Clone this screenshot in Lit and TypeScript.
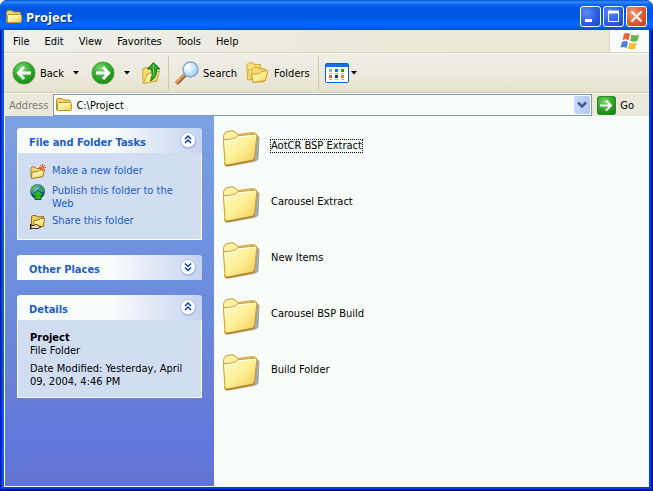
import { LitElement, html, svg, css } from "lit";
import { customElement, state } from "lit/decorators.js";

const gradients = html`<svg class="defs" width="0" height="0" aria-hidden="true">
  <defs>
    <linearGradient id="folder" x1="0" y1="0" x2="1" y2="1">
      <stop offset="0" stop-color="#fffcc8" /><stop offset="0.5" stop-color="#fdf096" /><stop offset="1" stop-color="#f3c64c" />
    </linearGradient>
    <linearGradient id="folderBack" x1="0" y1="0" x2="1" y2="0">
      <stop offset="0" stop-color="#fff3a4" /><stop offset="1" stop-color="#e8bc4c" />
    </linearGradient>
    <radialGradient id="green" cx="0.4" cy="0.3" r="0.75">
      <stop offset="0" stop-color="#7fd973" /><stop offset="0.5" stop-color="#38ad2c" /><stop offset="1" stop-color="#168312" />
    </radialGradient>
    <radialGradient id="lens" cx="0.35" cy="0.35" r="0.7">
      <stop offset="0" stop-color="#ffffff" /><stop offset="0.5" stop-color="#cfeaff" /><stop offset="1" stop-color="#9cc8f4" />
    </radialGradient>
    <radialGradient id="globe" cx="0.4" cy="0.3" r="0.7">
      <stop offset="0" stop-color="#8cc4f8" /><stop offset="0.6" stop-color="#2a6cc8" /><stop offset="1" stop-color="#123a86" />
    </radialGradient>
  </defs>
</svg>`;

const bigFolder = html`<svg class="big" viewBox="0 0 38 38" aria-hidden="true">
  <path d="M4 37.500L7 37.500L34 32.500L36.500 30L37.500 8L34 5Z" fill="#6f7268" opacity="0.6" />
  <path d="M1.500 12V6.500L3.500 3L10 1.500L14 3.500L16 5.500L31.500 3.500L34.500 5L33 9L8 14Z" fill="url(#folderBack)" stroke="#cfa03a" />
  <path d="M2.500 7L4.200 4L9.800 2.500L13.500 4.500L15 7L12 10H2.500Z" fill="#fff0a0" />
  <path d="M1.500 12.500Q1.500 10.800 3 10.600L11 9.800Q13 9.500 14.300 7.800Q15.300 6.700 17 6.600L33.500 5.200Q35 5.200 34.900 7L32.200 29.500Q32 31 30.500 31.500L5 36.500Q3.200 36.700 3 34.500Z" fill="url(#folder)" stroke="#cf9c34" />
  <path d="M2.900 13Q2.800 11.900 4 11.700L11.500 10.900Q14 10.500 15.200 8.800Q16 7.800 17.500 7.700L33.600 6.300" fill="none" stroke="#fffef0" />
  <path d="M3 34.500Q3.200 36.700 5 36.500L30.500 31.500Q32 31 32.200 29.500" fill="none" stroke="#b8821e" stroke-width="1.300" />
</svg>`;

const smallFolder = html`<svg class="i16" viewBox="0 0 16 16" aria-hidden="true">
  <path d="M0.500 13V3L1.500 1.500H6L7.500 3H13.500L14.500 4V13Z" fill="#f6d565" stroke="#b98a27" />
  <path d="M2.500 5.500H14.500L15.500 6.500V12.500L14.500 13.500H2.500L1.500 12.500V6.500Z" fill="url(#folder)" stroke="#c09230" />
  <path d="M2.500 6.500H14" stroke="#fffce0" />
</svg>`;

const roundArrow = (d: string) => html`<svg class="i24" viewBox="0 0 24 24" aria-hidden="true">
  <circle cx="12" cy="12" r="11" fill="url(#green)" stroke="#4a9e41" />
  <path d=${d} fill="none" stroke="#fff" stroke-width="3" />
</svg>`;

const upIcon = html`<svg class="i24" viewBox="0 0 24 24" aria-hidden="true">
  <path d="M3 21.500L2.500 9L4 7L9 6.500L10.500 8L17 8.500V20Z" fill="#f6dc6c" stroke="#cfa132" />
  <path d="M3.500 22.500L7 13L19.500 10L16.500 20Z" fill="url(#folder)" stroke="#cfa132" />
  <path d="M7.500 8L13.500 1.500L20 8H16.500Q17.500 16.500 10.500 20Q13.500 14 11.500 8Z" fill="#2fa32b" stroke="#187d18" />
  <path d="M13.500 3.500V9Q14.500 13 13 16" fill="none" stroke="#66c85c" />
</svg>`;

const searchIcon = html`<svg class="i24" viewBox="0 0 24 24" aria-hidden="true">
  <path d="M1.500 22.500L10 14" stroke="#8b6a4a" stroke-width="4" />
  <path d="M1.200 21.500L9 13.700" stroke="#f0a04a" stroke-width="2" />
  <circle cx="15.500" cy="8.500" r="7.500" fill="url(#lens)" stroke="#8ca6cc" stroke-width="1.500" />
  <path d="M10.500 8Q11 4 15 3.500" fill="none" stroke="#fff" stroke-width="1.500" />
</svg>`;

const foldersIcon = html`<svg class="i24" viewBox="0 0 24 24" aria-hidden="true">
  <path d="M1.500 18.500L0.800 4L2.500 2L7 1.800L8.500 3.800L14.500 3.500V15L4 19Z" fill="#fbe57c" stroke="#d0a330" />
  <path d="M4.500 18L2.500 9L15 6.500V15Z" fill="#fdf09a" stroke="#d8ae40" />
  <path d="M6.500 21L5.800 8.500L7.500 6.500L11.500 6L13 8H19.500V11.500L17 21Z" fill="#f9df70" stroke="#d0a330" />
  <path d="M7 21.500L5.500 13.500L14 12.500L15.500 10.500L22 9.500L19.500 19.500Z" fill="url(#folder)" stroke="#cc9c2c" />
</svg>`;

const viewsIcon = html`<svg class="i24" viewBox="0 0 24 20" aria-hidden="true">
  <rect x="0.500" y="0.500" width="23" height="19" rx="1" fill="#fffff4" stroke="#0a5bd0" />
  <rect x="1" y="1" width="22" height="3" fill="#1370e6" />
  <rect x="4" y="6" width="3" height="3" fill="#a6a6cc" /><rect x="10" y="6" width="3" height="3" fill="#1a70d8" /><rect x="16" y="6" width="3" height="3" fill="#1da51d" />
  <rect x="4" y="12" width="3" height="3" fill="#e2683c" /><rect x="10" y="12" width="3" height="3" fill="#0d2f9c" /><rect x="16" y="12" width="3" height="3" fill="#cf9b10" />
  <path d="M4 10.500H7M10 10.500H13M16 10.500H19M4 16.500H7M10 16.500H13M16 16.500H19" stroke="#b4b4a8" />
</svg>`;

const caret = html`<svg class="caret" viewBox="0 0 6 4" aria-hidden="true"><path d="M0 0H6L3 3.500Z" fill="#000" /></svg>`;

const flag = html`<svg class="flag" viewBox="0 0 20 20" aria-hidden="true">
  <path d="M4 3Q7 0.800 10 3L8.500 9.300Q5.500 7.500 2.500 9Z" fill="#e8653a" />
  <path d="M11.500 3.500Q15 5.300 19 3.500L17.300 10Q13.500 11.500 10 9.800Z" fill="#62b94a" />
  <path d="M2 10.700Q5 9 8 11L6.500 17Q3.500 15.200 0.500 16.700Z" fill="#4a83dc" />
  <path d="M9.500 11.500Q13 13.200 16.800 11.500L15.200 17.800Q11.500 19.300 8 17.500Z" fill="#f2bd2e" />
</svg>`;

const goIcon = html`<svg class="go-icon" viewBox="0 0 19 19" aria-hidden="true">
  <rect x="0.500" y="0.500" width="18" height="18" rx="2" fill="url(#green)" stroke="#2c8a2c" />
  <path d="M3 9.500H14M9 4.500L14 9.500L9 14.500" fill="none" stroke="#fff" stroke-width="2" />
</svg>`;

const newFolderIcon = html`<svg class="i16" viewBox="0 0 16 16" aria-hidden="true">
  <path d="M1 13V4L2 3H5L6.500 4.500H12.500V12L2.500 14Z" fill="#f6d67a" stroke="#a47a2c" />
  <path d="M1.500 14.500L2 8L8 7.500L9.500 6H14.500L13 12.500Z" fill="url(#folder)" stroke="#a47a2c" />
  <path d="M12.500 0V7M9 3.500H16M10 1L15 6M15 1L10 6" stroke="#ea5522" />
  <circle cx="12.500" cy="3.500" r="1.500" fill="#ff7c3a" />
</svg>`;

const globeIcon = html`<svg class="i16" viewBox="0 0 16 16" aria-hidden="true">
  <circle cx="7.500" cy="7.500" r="7.500" fill="url(#globe)" />
  <path d="M1.500 3Q5 -0.500 8 1L7 4L4 5L3 9L0.500 8Z" fill="#4fb14a" /><path d="M10 1L13 3L15 7L12 8L10 5Z" fill="#3da03a" />
  <path d="M8 6L14 11.500H11V15.500H5V11.500H2Z" fill="#2bb52a" stroke="#0c6512" />
</svg>`;

const shareIcon = html`<svg class="i16" viewBox="0 0 16 16" aria-hidden="true">
  <path d="M1.500 12V3L2.500 1.500H6L7.500 3L13.500 2.500V12H2Z" fill="#f3cf5a" stroke="#8e6a20" />
  <path d="M3.500 12L4 6.500L9 6L10.500 4.500H14.500L13.500 12.500H4Z" fill="url(#folder)" stroke="#9a7424" />
  <path d="M1 11.500H4L6 10L8 11.500L11 13L8 14.500H1Z" fill="#f7d9b0" stroke="#3c3226" />
  <path d="M0.500 10V15.500" stroke="#222" />
</svg>`;

const chevrons = (open: boolean) => html`<svg class="chev" viewBox="0 0 20 20" aria-hidden="true">
  <circle cx="10.500" cy="11" r="8" fill="#8f9fd0" opacity="0.6" />
  <circle cx="10" cy="10" r="7.500" fill="#fdfeff" stroke="#b9c3e4" />
  ${open
    ? svg`<path d="M7 9L10 6L13 9M7 13L10 10L13 13" fill="none" stroke="#0c3cae" stroke-width="1.500" />`
    : svg`<path d="M7 6.500L10 9.500L13 6.500M7 10.500L10 13.500L13 10.500" fill="none" stroke="#0c3cae" stroke-width="1.500" />`}
</svg>`;

@customElement("app-root")
class AppRoot extends LitElement {
  @state() private open: Record<string, boolean> = { tasks: true, places: false, details: true };

  private menus = ["File", "Edit", "View", "Favorites", "Tools", "Help"];
  private folders = ["AotCR BSP Extract", "Carousel Extract", "New Items", "Carousel BSP Build", "Build Folder"];
  private tasks = [
    { icon: newFolderIcon, text: "Make a new folder" },
    { icon: globeIcon, text: "Publish this folder to the Web" },
    { icon: shareIcon, text: "Share this folder" },
  ];

  static styles = css`
    :host { display: block; font: 11px/13px Tahoma, "DejaVu Sans Condensed", "DejaVu Sans", sans-serif; color: #000; }
    * { box-sizing: border-box; }
    button, input { font: inherit; color: inherit; margin: 0; padding: 0; border: 0; background: none; border-radius: 0; }
    svg { display: block; flex: none; }
    a { color: #215dc6; text-decoration: none; }
    .defs { position: absolute; }
    .i16 { width: 16px; height: 16px; }
    .i24 { width: 24px; height: 24px; }
    .window { min-height: 100vh; display: flex; flex-direction: column; padding: 0 4px; border-radius: 7px 7px 0 0; border-bottom: 2px solid #00149a;
      background: linear-gradient(90deg, #0019a8 0 1px, #0834d8 1px 2px, #0a54ea 2px 4px, #0040e0 4px calc(100% - 2px), #0020b0 calc(100% - 2px) calc(100% - 1px), #00128c calc(100% - 1px)); }
    .title { height: 30px; margin: 0 -4px; padding: 3px 6px 0 6px; display: flex; align-items: center; gap: 4px; border-radius: 7px 7px 0 0;
      background: linear-gradient(#0a4fd0 0, #2f8bff 2px, #0a62ee 5px, #0054e0 9px, #0058e8 18px, #0668ff 24px, #0062f6 27px, #0046cc 30px); }
    .title h1 { flex: 1; margin: 0; font: bold 13px/16px "Trebuchet MS", "Open Sans", sans-serif; color: #fff; text-shadow: 1px 1px #0a2b80; }
    .caps { display: flex; gap: 2px; }
    .cap { width: 21px; height: 21px; border: 1px solid #fff; border-radius: 3px; background: radial-gradient(circle at 30% 30%, #5a8cf4, #2a5be0 60%, #1e48c4); }
    .cap.close { background: radial-gradient(circle at 30% 30%, #f09a78, #dc5530 60%, #c03c16); }
    .cap svg { width: 19px; height: 19px; }
    .frame { flex: 1; display: flex; flex-direction: column; background: #ece9d8; border-bottom: 1px solid #fff; margin-bottom: 2px; }
    .menubar { height: 23px; display: flex; gap: 1px; border-bottom: 1px solid #d8d2bd; background: linear-gradient(90deg, #eff0ec, #ece9dc 50%, #ebe8d8); padding-left: 2px; }
    .menubar button { padding: 0 7px; }
    .brand { margin-left: auto; width: 40px; background: #fbfdfa; border-left: 1px solid #d8d2bd; display: flex; align-items: center; justify-content: center; }
    .flag { width: 20px; height: 20px; }
    .toolbar { height: 40px; display: flex; align-items: center; padding: 0 8px; background: linear-gradient(#f0eee6, #ebe8dc 60%, #e6e2d0); border-top: 1px solid #fbfaf4; border-bottom: 1px solid #d3cdb6; }
    .toolbar button { display: flex; align-items: center; gap: 4px; height: 30px; flex: none; }
    .caret { width: 6px; height: 4px; }
    .toolbar .drop { padding: 0 10px 0 9px; }
    .forward { margin-left: 2px; }
    .sep { width: 1px; height: 34px; background: #cdc7ae; margin: 0 6px 0 4px; flex: none; }
    .folders { margin: 0 4px 0 9px; }
    .toolbar .views { gap: 2px; }
    .views .i24 { height: 20px; }
    .address { height: 23px; display: flex; align-items: center; padding: 0 15px 0 5px; gap: 5px; background: #ebe8dc; border-top: 1px solid #fbfaf4; }
    .address label { color: #7f7c70; }
    .combo { flex: 1; min-width: 0; height: 22px; display: flex; align-items: center; border: 1px solid #7f9db9; background: #f8fdf9; padding: 0 1px 0 2px; gap: 4px; }
    .combo input { flex: 1; min-width: 0; outline: 0; height: 18px; }
    .combo button { width: 16px; height: 18px; border-radius: 2px; background: linear-gradient(90deg, #c9d9fc, #b4c8f4); display: flex; align-items: center; justify-content: center; }
    .combo button svg { width: 10px; height: 8px; }
    .go { display: flex; align-items: center; gap: 4px; }
    .go-icon { width: 19px; height: 19px; }
    .body { flex: 1; display: flex; background: #f8fdf9; border-left: 1px solid #fff; }
    aside { width: 209px; flex: none; padding: 12px; display: flex; flex-direction: column; gap: 15px;
      background: linear-gradient(#7ba2e2 0, #7093e0 32%, #6a8bdc 52%, #687ed8 76%, #627bda 80%, #6078da 90%, #6274d0 100%); }
    .head { height: 25px; display: flex; align-items: center; padding: 0 4px 0 12px; border-radius: 3px 3px 0 0; background: linear-gradient(90deg, #f9fdfb 0 50%, #c6d3f2); }
    .head h2 { flex: 1; margin: 0; padding-top: 4px; font: bold 11px/13px Tahoma, "DejaVu Sans Condensed", "DejaVu Sans", sans-serif; color: #215dc6; white-space: nowrap; }
    .head button { padding-bottom: 2px; }
    .chev { width: 20px; height: 20px; }
    .content { border: 1px solid #fff; border-top: 0; background: #d1ddf1; }
    .tasks { list-style: none; margin: 0; padding: 11px 20px 9px 12px; display: flex; flex-direction: column; gap: 4px; }
    .tasks a { display: flex; gap: 6px; }
    .details { padding: 11px 12px 9px; }
    .details p { margin: 0 0 5px; }
    .details p:last-child { margin: 0; }
    main { flex: 1; min-width: 0; padding: 13px 9px 12px 8px; }
    .files { list-style: none; margin: 0; padding: 0; display: flex; flex-direction: column; gap: 18px; }
    .files a { display: flex; width: fit-content; gap: 10px; color: #000; outline: 0; }
    .big { width: 38px; height: 38px; }
    .files span { margin: 10px 0 14px; height: 14px; border: 1px solid transparent; line-height: 12px; white-space: nowrap; }
    .files .focused span { border: 1px dotted #000; }
  `;

  private panel(key: string, title: string, content: unknown) {
    const open = this.open[key];
    return html`<section>
      <div class="head">
        <h2>${title}</h2>
        <button aria-label="Toggle ${title}" aria-expanded=${open} @click=${() => (this.open = { ...this.open, [key]: !open })}>${chevrons(open)}</button>
      </div>
      ${open ? html`<div class="content">${content}</div>` : ""}
    </section>`;
  }

  render() {
    return html`${gradients}
      <div class="window">
        <header class="title">
          ${smallFolder}
          <h1>Project</h1>
          <div class="caps">
            <button class="cap" aria-label="Minimize"><svg viewBox="0 0 19 19"><rect x="4" y="12" width="7" height="3" fill="#fff" /></svg></button>
            <button class="cap" aria-label="Maximize"><svg viewBox="0 0 19 19"><path d="M4.500 4.500H14.500V14.500H4.500Z" fill="none" stroke="#fff" /><path d="M4 5H15" stroke="#fff" stroke-width="3" /></svg></button>
            <button class="cap close" aria-label="Close"><svg viewBox="0 0 19 19"><path d="M4.500 4.500L14.500 14.500M14.500 4.500L4.500 14.500" stroke="#fff" stroke-width="2" /></svg></button>
          </div>
        </header>
        <div class="frame">
          <nav class="menubar">
            ${this.menus.map((m) => html`<button>${m}</button>`)}
            <div class="brand">${flag}</div>
          </nav>
          <div class="toolbar">
            <button>${roundArrow("M19 12H7M12 6L6.500 12L12 18")}Back</button>
            <button class="drop" aria-label="Back history">${caret}</button>
            <button class="forward" aria-label="Forward">${roundArrow("M5 12H17M12 6L17.500 12L12 18")}</button>
            <button class="drop" aria-label="Forward history">${caret}</button>
            <button aria-label="Up">${upIcon}</button>
            <div class="sep"></div>
            <button>${searchIcon}Search</button>
            <button class="folders">${foldersIcon}Folders</button>
            <div class="sep"></div>
            <button class="views" aria-label="Views">${viewsIcon}${caret}</button>
          </div>
          <div class="address">
            <label for="path">Address</label>
            <div class="combo">
              ${smallFolder}
              <input id="path" type="text" value="C:\\Project" />
              <button aria-label="Show addresses"><svg viewBox="0 0 10 8"><path d="M1 1.500L5 5.500L9 1.500" fill="none" stroke="#3f5c92" stroke-width="2.500" /></svg></button>
            </div>
            <button class="go">${goIcon}Go</button>
          </div>
          <div class="body">
            <aside>
              ${this.panel("tasks", "File and Folder Tasks", html`<ul class="tasks">
                ${this.tasks.map((t) => html`<li><a href="#">${t.icon}<span>${t.text}</span></a></li>`)}
              </ul>`)}
              ${this.panel("places", "Other Places", "")}
              ${this.panel("details", "Details", html`<div class="details">
                <p><b>Project</b><br />File Folder</p>
                <p>Date Modified: Yesterday, April 09, 2004, 4:46 PM</p>
              </div>`)}
            </aside>
            <main>
              <ul class="files">
                ${this.folders.map((f, i) => html`<li><a href="#" class=${i === 0 ? "focused" : ""}>${bigFolder}<span>${f}</span></a></li>`)}
              </ul>
            </main>
          </div>
        </div>
      </div>`;
  }
}
